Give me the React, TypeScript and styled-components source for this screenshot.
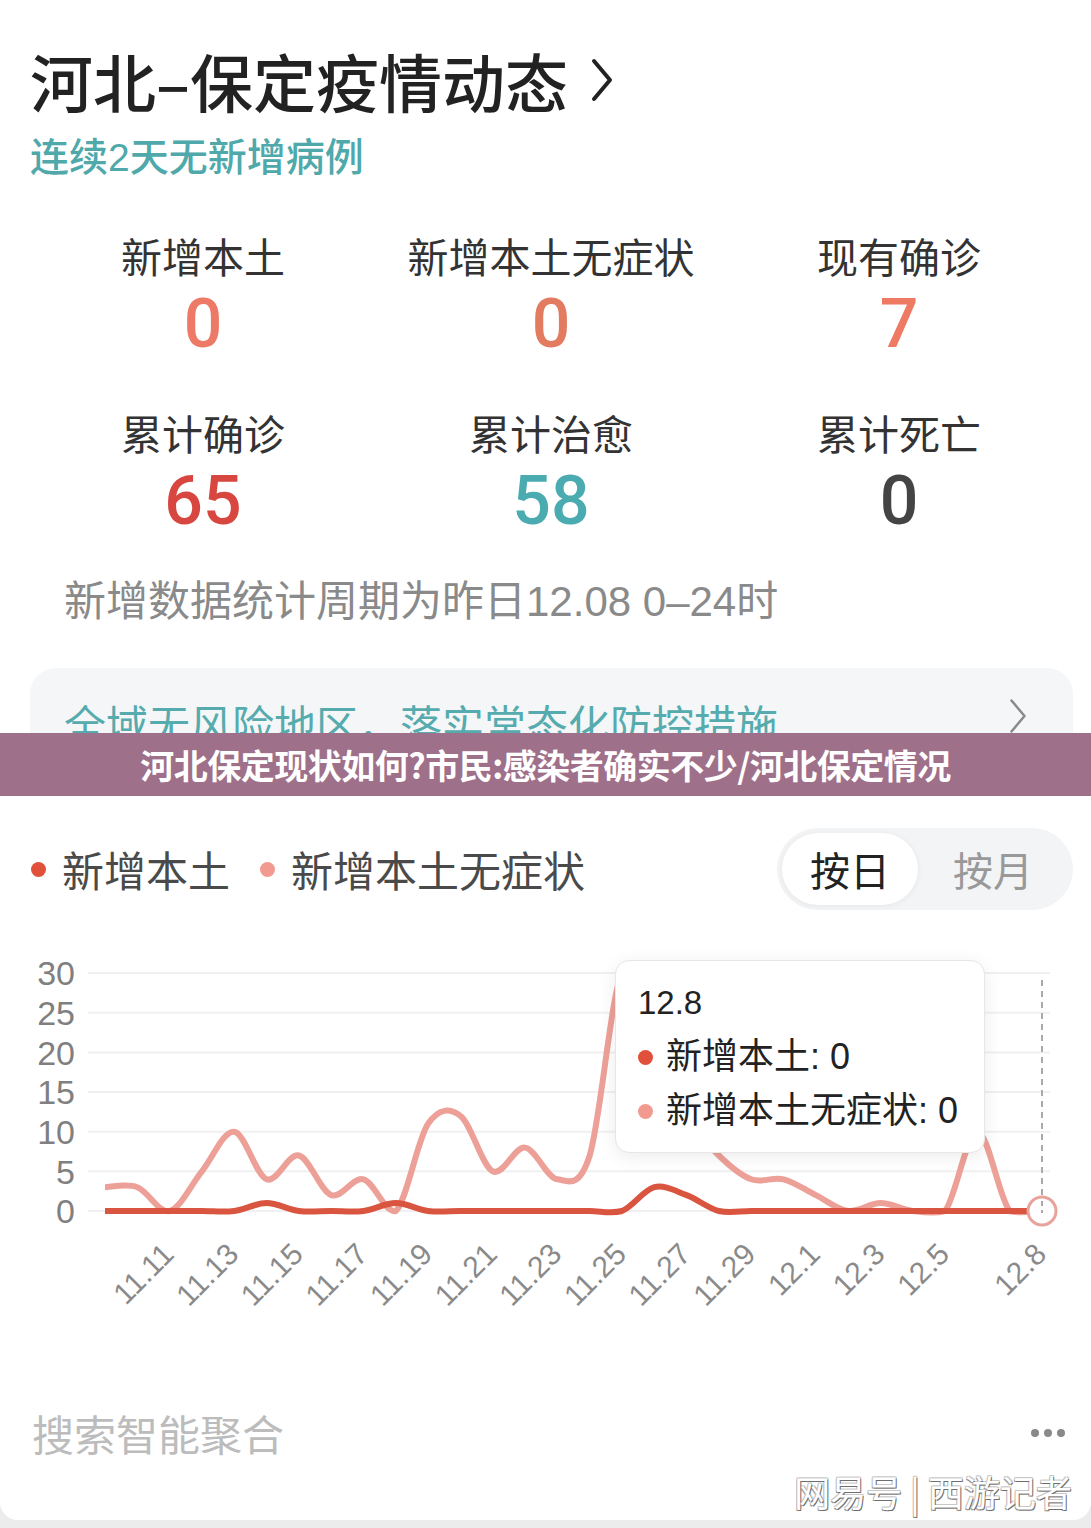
import React from "react";
import styled, { createGlobalStyle } from "styled-components";

const GlobalStyle = createGlobalStyle`
  html, body {
    margin: 0;
    padding: 0;
    background: #ececec;
  }
  body {
    font-family: "Liberation Sans", "Noto Sans CJK SC", sans-serif;
  }
`;

const CJK = `"Noto Sans CJK SC", sans-serif`;

const Card = styled.div`
  position: relative;
  width: 1091px;
  height: 1520px;
  background: #fff;
  border-radius: 0 0 18px 18px;
  overflow: hidden;
`;

const Header = styled.header`
  padding: 44px 30px 0 30px;
`;

const Title = styled.h1`
  margin: 0;
  display: flex;
  align-items: center;
  gap: 22px;
  font-family: ${CJK};
  font-size: 63px;
  line-height: 72px;
  font-weight: 500;
  color: #222;
`;

const Subtitle = styled.div`
  margin-top: 17px;
  font-family: "Liberation Sans", ${CJK};
  font-size: 39px;
  line-height: 50px;
  font-weight: 500;
  color: #4fa9ab;
`;

const StatsGrid = styled.div`
  display: grid;
  grid-template-columns: repeat(3, 1fr);
  row-gap: 48px;
  margin: 47px 18px 0 29px;
`;

const Stat = styled.div`
  display: flex;
  flex-direction: column;
  align-items: center;
`;

const StatLabel = styled.div`
  font-family: ${CJK};
  font-size: 41px;
  line-height: 50px;
  color: #333;
  margin-bottom: 9px;
`;

const StatValue = styled.div<{ $color: string }>`
  font-family: Roboto, "Liberation Sans", sans-serif;
  font-size: 68px;
  line-height: 70px;
  font-weight: 500;
  color: ${(p) => p.$color};
`;

const Note = styled.div`
  margin: 41px 0 0 64px;
  font-size: 42px;
  line-height: 50px;
  color: #8a8a8a;
`;

const Notice = styled.div`
  margin: 41px 18px 0 30px;
  height: 112px;
  box-sizing: border-box;
  padding: 30px 46px 0 34px;
  background: #f5f6f8;
  border-radius: 26px;
  display: flex;
  justify-content: space-between;
  align-items: flex-start;
`;

const NoticeText = styled.div`
  font-family: ${CJK};
  font-size: 42px;
  line-height: 50px;
  color: #55abad;
`;

const Banner = styled.div`
  position: absolute;
  top: 733px;
  left: 0;
  right: 0;
  height: 63px;
  background: #9f7089;
  display: flex;
  align-items: center;
  justify-content: center;
  font-family: ${CJK};
  font-size: 34px;
  font-weight: 700;
  color: #fff;
  letter-spacing: -0.5px;
`;

const LegendRow = styled.div`
  margin: 48px 18px 0 31px;
  display: flex;
  align-items: center;
  justify-content: space-between;
`;

const Legend = styled.div`
  display: flex;
  align-items: center;
  gap: 30px;
`;

const LegendItem = styled.div`
  display: flex;
  align-items: center;
  gap: 16px;
  font-family: ${CJK};
  font-size: 42px;
  line-height: 50px;
  color: #4a4a4a;
`;

const Dot = styled.span<{ $color: string; $size?: number }>`
  display: inline-block;
  width: ${(p) => p.$size ?? 15}px;
  height: ${(p) => p.$size ?? 15}px;
  border-radius: 50%;
  background: ${(p) => p.$color};
  flex-shrink: 0;
`;

const Toggle = styled.div`
  width: 296px;
  height: 82px;
  box-sizing: border-box;
  padding: 5px;
  border-radius: 41px;
  background: #f3f4f6;
  display: flex;
`;

const ToggleItem = styled.div<{ $active?: boolean }>`
  flex: ${(p) => (p.$active ? "0 0 136px" : "1")};
  border-radius: 36px;
  background: ${(p) => (p.$active ? "#fff" : "transparent")};
  box-shadow: ${(p) => (p.$active ? "0 1px 6px rgba(0,0,0,0.06)" : "none")};
  display: flex;
  align-items: center;
  justify-content: center;
  font-family: ${CJK};
  font-size: 40px;
  color: ${(p) => (p.$active ? "#222" : "#999")};
`;

const ChartWrap = styled.div`
  position: relative;
  margin-top: 18px;
  height: 420px;
`;

const ChartSvg = styled.svg`
  display: block;
`;

const Tooltip = styled.div`
  position: absolute;
  left: 615px;
  top: 32px;
  width: 370px;
  height: 193px;
  box-sizing: border-box;
  padding: 20px 22px 0 22px;
  background: #fff;
  border: 1px solid #e6e6e6;
  border-radius: 14px;
  box-shadow: 0 4px 18px rgba(0, 0, 0, 0.08);
`;

const TipTitle = styled.div`
  font-size: 33px;
  line-height: 44px;
  color: #222;
`;

const TipRow = styled.div<{ $first?: boolean }>`
  display: flex;
  align-items: center;
  gap: 13px;
  margin-top: ${(p) => (p.$first ? 5 : 0)}px;
  font-size: 36px;
  line-height: 54px;
  color: #222;
`;

const Footer = styled.div`
  margin-top: 60px;
  padding: 0 26px 0 32px;
  display: flex;
  align-items: center;
  justify-content: space-between;
`;

const FooterText = styled.div`
  font-family: ${CJK};
  font-size: 42px;
  line-height: 50px;
  color: #bcbcbc;
`;

const MoreDots = styled.div`
  display: flex;
  gap: 5px;
`;

const Watermark = styled.div`
  margin-top: 10px;
  padding-right: 19px;
  text-align: right;
  font-family: ${CJK};
  font-size: 36px;
  line-height: 46px;
  color: #fff;
  text-shadow: 1px 1px 0 #6e6e6e, -1px -1px 0 #c8c8c8, 1px -1px 0 #c8c8c8, -1px 1px 0 #9a9a9a;
`;

const stats = [
  { label: "新增本土", value: "0", color: "#ec7a66" },
  { label: "新增本土无症状", value: "0", color: "#e27b60" },
  { label: "现有确诊", value: "7", color: "#ef7a64" },
  { label: "累计确诊", value: "65", color: "#d84640" },
  { label: "累计治愈", value: "58", color: "#4aabb1" },
  { label: "累计死亡", value: "0", color: "#444" },
];

// 11.09 .. 12.8
const local = [0, 0, 0, 0, 0, 1, 0, 0, 0, 1, 0, 0, 0, 0, 0, 0, 0, 3, 2, 0, 0, 0, 0, 0, 0, 0, 0, 0, 0, 0];
const asym = [3, 3, 0, 5, 10, 4, 7, 2, 4, 0, 11, 12, 5, 8, 4, 7, 30, 22, 12, 7, 4, 4, 2, 0, 1, 0, 0, 10, 0, 0];

const xLabels: [number, string][] = [
  [2, "11.11"], [4, "11.13"], [6, "11.15"], [8, "11.17"], [10, "11.19"], [12, "11.21"], [14, "11.23"],
  [16, "11.25"], [18, "11.27"], [20, "11.29"], [22, "12.1"], [24, "12.3"], [26, "12.5"], [29, "12.8"],
];

const X0 = 105;
const DX = (1042 - 105) / 29;
const Y0 = 283;
const KY = 7.93;

const px = (i: number) => X0 + i * DX;
const py = (v: number) => Y0 - v * KY;

// catmull-rom, control points kept from dropping far below the zero line
function smoothPath(vals: number[]) {
  const p = vals.map((v, i) => [px(i), py(v)]);
  const clampY = (y: number) => Math.min(y, Y0 + 3);
  let d = `M${p[0][0].toFixed(1)},${p[0][1].toFixed(1)}`;
  for (let i = 0; i < p.length - 1; i++) {
    const p0 = p[i - 1] || p[i];
    const p1 = p[i];
    const p2 = p[i + 1];
    const p3 = p[i + 2] || p2;
    const c1x = p1[0] + (p2[0] - p0[0]) / 6;
    const c1y = clampY(p1[1] + (p2[1] - p0[1]) / 6);
    const c2x = p2[0] - (p3[0] - p1[0]) / 6;
    const c2y = clampY(p2[1] - (p3[1] - p1[1]) / 6);
    d += ` C${c1x.toFixed(1)},${c1y.toFixed(1)} ${c2x.toFixed(1)},${c2y.toFixed(1)} ${p2[0].toFixed(1)},${p2[1].toFixed(1)}`;
  }
  return d;
}

const Chevron = ({ w, h, color, sw }: { w: number; h: number; color: string; sw: number }) => (
  <svg width={w} height={h} viewBox={`0 0 ${w} ${h}`} fill="none">
    <path d={`M${sw} ${sw} L${w - sw} ${h / 2} L${sw} ${h - sw}`} stroke={color} strokeWidth={sw} strokeLinecap="round" strokeLinejoin="round" />
  </svg>
);

const Chart = () => (
  <ChartWrap>
    <ChartSvg width={1091} height={420} viewBox="0 0 1091 420">
      {[0, 5, 10, 15, 20, 25, 30].map((v) => (
        <g key={v}>
          <line x1={88} x2={1050} y1={py(v)} y2={py(v)} stroke="#f0f0f2" strokeWidth={2} />
          <text x={75} y={py(v)} dy="0.36em" textAnchor="end" fontFamily="Liberation Sans, sans-serif" fontSize={34} fill="#808080">
            {v}
          </text>
        </g>
      ))}
      {xLabels.map(([i, t]) => (
        <text
          key={t}
          transform={`translate(${px(i) + 6}, 328) rotate(-45)`}
          textAnchor="end"
          fontFamily="Liberation Sans, sans-serif"
          fontSize={30}
          fill="#8a8a8a"
        >
          {t}
        </text>
      ))}
      <line x1={1042} x2={1042} y1={52} y2={Y0} stroke="#aaa" strokeWidth={2} strokeDasharray="6 5" />
      <path d={smoothPath(asym)} fill="none" stroke="#eda097" strokeWidth={6} strokeLinejoin="round" />
      <path d={smoothPath(local)} fill="none" stroke="#d9553f" strokeWidth={6} strokeLinejoin="round" />
      <circle cx={1042} cy={Y0} r={14} fill="#fff" stroke="#e8a49c" strokeWidth={3} />
      <line x1={1042} x2={1042} y1={Y0 - 10} y2={Y0 + 2} stroke="#aaa" strokeWidth={2} strokeDasharray="5 4" />
    </ChartSvg>
    <Tooltip>
      <TipTitle>12.8</TipTitle>
      <TipRow $first>
        <Dot $color="#e0503a" $size={15} />
        <span>新增本土: 0</span>
      </TipRow>
      <TipRow>
        <Dot $color="#f29a90" $size={15} />
        <span>新增本土无症状: 0</span>
      </TipRow>
    </Tooltip>
  </ChartWrap>
);

export default function App() {
  return (
    <>
      <GlobalStyle />
      <Card>
        <Header>
          <Title>
            河北–保定疫情动态
            <Chevron w={24} h={46} color="#222" sw={4} />
          </Title>
          <Subtitle>连续2天无新增病例</Subtitle>
        </Header>

        <StatsGrid>
          {stats.map((s) => (
            <Stat key={s.label}>
              <StatLabel>{s.label}</StatLabel>
              <StatValue $color={s.color}>{s.value}</StatValue>
            </Stat>
          ))}
        </StatsGrid>

        <Note>新增数据统计周期为昨日12.08 0–24时</Note>

        <Notice>
          <NoticeText>全域无风险地区，落实常态化防控措施</NoticeText>
          <Chevron w={18} h={36} color="#8a8a8a" sw={2.5} />
        </Notice>

        <LegendRow>
          <Legend>
            <LegendItem>
              <Dot $color="#e0503a" />
              新增本土
            </LegendItem>
            <LegendItem>
              <Dot $color="#f29a90" />
              新增本土无症状
            </LegendItem>
          </Legend>
          <Toggle>
            <ToggleItem $active>按日</ToggleItem>
            <ToggleItem>按月</ToggleItem>
          </Toggle>
        </LegendRow>

        <Chart />

        <Footer>
          <FooterText>搜索智能聚合</FooterText>
          <MoreDots>
            <Dot $color="#8a8a8a" $size={8} />
            <Dot $color="#8a8a8a" $size={8} />
            <Dot $color="#8a8a8a" $size={8} />
          </MoreDots>
        </Footer>

        <Watermark>网易号 | 西游记者</Watermark>

        <Banner>河北保定现状如何?市民:感染者确实不少/河北保定情况</Banner>
      </Card>
    </>
  );
}
